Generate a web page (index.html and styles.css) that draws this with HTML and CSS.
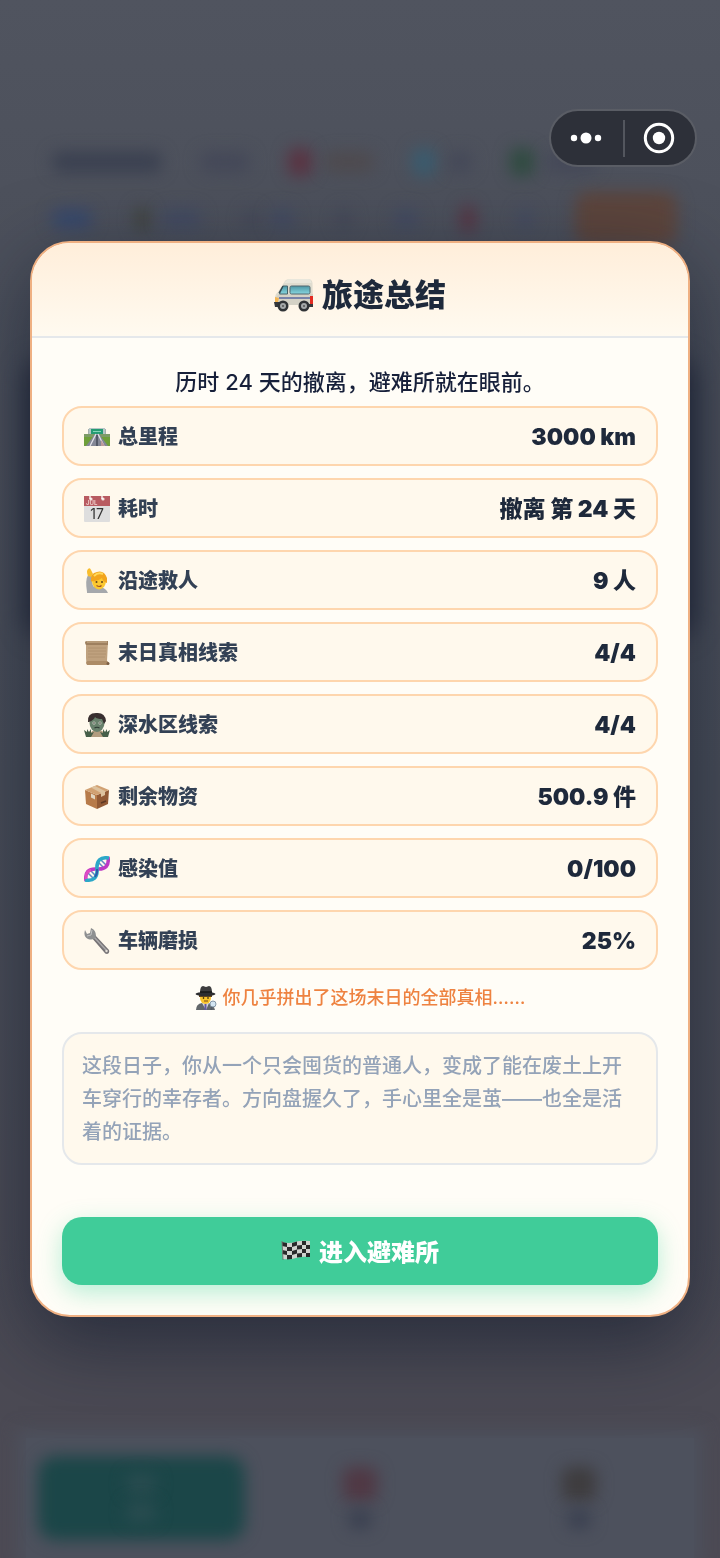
FILE: index.html
```html
<!DOCTYPE html>
<html lang="zh-CN">
<head>
<meta charset="utf-8">
<meta name="viewport" content="width=device-width, initial-scale=1">
<title>旅途总结</title>
<link rel="stylesheet" href="styles.css">
</head>
<body>
<div class="scene" aria-hidden="true">
  <div class="scene-status">
    <div class="status-row">
      <i class="blob ink wide"></i><i class="blob slate mid"></i>
      <span class="pair"><i class="blob red"></i><i class="blob brown mid"></i></span>
      <span class="pair"><i class="blob cyan"></i><i class="blob slate"></i></span>
      <span class="pair"><i class="blob green"></i><i class="blob slate mid"></i></span>
    </div>
    <div class="status-row lower">
      <i class="blob blue long"></i>
      <span class="pair"><i class="blob olive thin"></i><i class="blob navy long"></i></span>
      <span class="pair"><i class="blob slate thin"></i><i class="blob navy"></i></span>
      <i class="blob slate thin"></i><i class="blob navy"></i><i class="blob red thin"></i><i class="blob navy thin"></i>
      <i class="blob orange"></i>
    </div>
  </div>
  <div class="scene-card"></div>
  <div class="scene-nav">
    <div class="nav-cell active"><i class="blob pale"></i><i class="blob pale"></i></div>
    <div class="nav-cell"><i class="blob berry tall"></i><i class="blob ink"></i></div>
    <div class="nav-cell"><i class="blob bark tall"></i><i class="blob ink"></i></div>
  </div>
</div>

<div class="capsule">
  <button class="capsule-btn" type="button" aria-label="更多">
    <svg width="32" height="12" viewBox="0 0 32 12" fill="#fff"><circle cx="4" cy="6" r="3.2"/><circle cx="16" cy="6" r="5.5"/><circle cx="28" cy="6" r="3.2"/></svg>
  </button>
  <button class="capsule-btn" type="button" aria-label="关闭">
    <svg width="32" height="32" viewBox="0 0 32 32"><circle cx="16" cy="16" r="13.7" fill="none" stroke="#fff" stroke-width="3"/><circle cx="16" cy="16" r="6.2" fill="#fff"/></svg>
  </button>
</div>

<div class="overlay">
  <main class="modal" role="dialog" aria-labelledby="title">
    <header class="modal-head">
      <svg class="icon-title" viewBox="0 0 40 34">
        <defs><linearGradient id="glass" x1="0" y1="0" x2="0" y2="1"><stop offset="0" stop-color="#4b96a5"/><stop offset="1" stop-color="#88d6df"/></linearGradient></defs>
        <path d="M11 3Q12 1 17 1h17q4 0 4.500 4L39 27H5L1 24v-5q0-3 3-5z" fill="#dfdccf"/>
        <path d="M12 3Q13 1 17 1h17q3 0 3.500 4H10z" fill="#e9e7dc"/>
        <path d="M1 20l4-4h34v11H3z" fill="#d5d2c6"/>
        <path d="M9 8h4.500v8H5.500z" fill="url(#glass)" stroke="#446269" stroke-width="1"/>
        <path d="M5 15l4-7" stroke="#344850" stroke-width="1.300"/>
        <rect x="16" y="8" width="20" height="8" rx="1.500" fill="url(#glass)" stroke="#51676e"/>
        <path d="M5 20h33" stroke="#5968a0" stroke-width="1.600"/>
        <path d="M36 18h3v8h-3z" fill="#e32c22"/><path d="M1 19l4 1-1 4H1z" fill="#f4b654"/>
        <path d="M0 24h5v5H1zM34 26h5v3h-5z" fill="#34373b"/>
        <circle cx="9" cy="28" r="5.500" fill="#303336"/><circle cx="9" cy="28" r="3" fill="#a4a8a9"/><circle cx="9" cy="28" r="1" fill="#555"/>
        <circle cx="30" cy="28" r="5.500" fill="#303336"/><circle cx="30" cy="28" r="3" fill="#a4a8a9"/><circle cx="30" cy="28" r="1" fill="#555"/>
      </svg>
      <h1 id="title">旅途总结</h1>
    </header>

    <div class="modal-body">
      <p class="intro">历时 24 天的撤离，避难所就在眼前。</p>
      <dl class="stats">
        <div class="stat">
          <dt><svg class="icon" viewBox="0 0 26 26">
            <path d="M5 5v7M21 5v7" stroke="#87969a" stroke-width="1.500"/><rect x="5" y="4" width="16" height="7" fill="#b7c6c6"/><rect x="7" y="5" width="12" height="5" fill="#259b73"/><path d="M9 7.500h8" stroke="#83d5b8"/>
            <path d="M0 10h26v12H0z" fill="#6f9f3a"/><path d="M0 10h26v3H0z" fill="#7d9b67"/>
            <path d="M11 10h4l9 12H2z" fill="#838796"/><path d="M12 10L6 22M14 10l6 12" stroke="#e1e1e8" stroke-width="1.300"/><path d="M13 11v11" stroke="#545968" stroke-width="2"/><path d="M17 16l4 6h-4z" fill="#bc9b9b"/>
          </svg>总里程</dt><dd>3000 km</dd>
        </div>
        <div class="stat">
          <dt><svg class="icon" viewBox="0 0 26 26">
            <rect x="0" y="0" width="26" height="26" rx="1" fill="#dedede"/><path d="M0 0h26v10H0z" fill="#b85b61"/>
            <circle cx="7" cy="3" r="1.600" fill="#f3e7e4"/><circle cx="19" cy="3" r="1.600" fill="#f3e7e4"/><path d="M6 0v3M18 0v3" stroke="#fff" stroke-width="1.300"/>
            <text x="2" y="9" class="cal-month">JUL</text><text x="13" y="23" class="cal-day">17</text>
          </svg>耗时</dt><dd>撤离 第 24 天</dd>
        </div>
        <div class="stat">
          <dt><svg class="icon" viewBox="0 0 26 26">
            <path d="M3 24Q1 12 4 7l4 1q-1 7 2 11h6q6 1 8 6H3z" fill="#a5a8ac"/><path d="M4 8Q2 3 4 1q2-2 3 1l2 4-2 3z" fill="#f8bd2d"/>
            <ellipse cx="15" cy="13" rx="7" ry="8.500" fill="#fbc82f"/><path d="M7 14Q6 5 13 4q7-2 10 6v5q-4-1-5-5-5 4-10 3z" fill="#f2a51d"/><path d="M10 8q4-4 9-2" stroke="#ffd95a" stroke-width="2" fill="none"/>
            <circle cx="12.500" cy="14" r="1" fill="#61441c"/><circle cx="18" cy="14" r="1" fill="#61441c"/><path d="M12.500 17.500q3 2 5 0" fill="none" stroke="#a45322" stroke-width="1.200"/>
          </svg>沿途救人</dt><dd>9 人</dd>
        </div>
        <div class="stat">
          <dt><svg class="icon" viewBox="0 0 26 26">
            <path d="M2 2h22l-1 19 2 3H3q-1-3-1-6z" fill="#bfa17e"/><path d="M1 2q0-1 3-1h20v4H2Q1 4 1 2z" fill="#9e805f"/><path d="M3 2h20" stroke="#d0b694"/><path d="M2 23q0-2 2-2h19q2 1 2 3l-2 1H3z" fill="#ad8c67"/><path d="M4 8h18M4 11h18M4 14h18M4 17h17" stroke="#ad8f6d" stroke-width=".8"/><circle cx="24" cy="23.500" r="1.500" fill="#7b5e44"/>
          </svg>末日真相线索</dt><dd>4/4</dd>
        </div>
        <div class="stat">
          <dt><svg class="icon" viewBox="0 0 26 26">
            <path d="M5 25q1-6 6-7h4q6 1 7 7z" fill="#b29c7f"/><ellipse cx="13" cy="11" rx="7.500" ry="9" fill="#68806b"/><path d="M4 10Q3 1 12 1q9-1 10 8l-2 3-2-5q-5 0-7-2-1 3-6 5z" fill="#392f2f"/>
            <circle cx="10" cy="11" r="1.500" fill="#dde1d3"/><circle cx="16" cy="11" r="1.500" fill="#dde1d3"/><circle cx="10" cy="11" r=".7"/><circle cx="16" cy="11" r=".7"/><path d="M10.500 16q2.500-1.500 5 0" stroke="#2d3932" stroke-width="1.200" fill="none"/>
            <path d="M0 18l3 2v-3l2 3 2-3v4l3-1-3 5H2z M26 18l-3 2v-3l-2 3-2-3v4l-3-1 3 5h5z" fill="#465f49"/>
          </svg>深水区线索</dt><dd>4/4</dd>
        </div>
        <div class="stat">
          <dt><svg class="icon" viewBox="0 0 26 26">
            <path d="M1 6l12 5v14L2 20z" fill="#b77b4a"/><path d="M25 6l-12 5v14l11-5z" fill="#925a35"/><path d="M1 6l12-5 12 5-12 5z" fill="#d1a172"/><path d="M7 3.500l10 5.500v4l4-2V7L11 2z" fill="#ddc29e"/><path d="M7 9.500l4 2v4l-4-2z" fill="#e2d7c2"/><path d="M17 19l5-2" stroke="#5e3823" stroke-width="1.500"/>
          </svg>剩余物资</dt><dd>500.9 件</dd>
        </div>
        <div class="stat">
          <dt><svg class="icon" viewBox="0 0 26 26" fill="none">
            <path d="M4 17l5 5M7 15l5 5M14 6l5 5M17 4l5 5" stroke="#6386c3" stroke-width="1.500"/>
            <path d="M2 25Q0 12 13 13T24 1" stroke="#bd39c5" stroke-width="3.500"/><path d="M1 24Q14 26 13 13T25 2" stroke="#2ca8c8" stroke-width="3.500"/><path d="M2 23Q1 16 7 14" stroke="#e04bc2" stroke-width="2.500"/><path d="M13 13q1 4-2 8" stroke="#3259aa" stroke-width="2"/>
          </svg>感染值</dt><dd>0/100</dd>
        </div>
        <div class="stat">
          <dt><svg class="icon" viewBox="0 0 26 26">
            <path d="M7 9l4-2 14 15q1 3-2 4-2 0-3-2z" fill="#777477"/><path d="M10 9l13 14" stroke="#aaa9aa" stroke-width="1.500"/><path d="M7 0l-1 5-3 1-2-4Q-1 9 4 11q6 2 8-3 0-6-5-8z" fill="#8e9091"/><path d="M8 2l-1 5-4 1" fill="none" stroke="#c1c2c2"/><circle cx="22.500" cy="23" r="1.200" fill="#e6e1d9"/>
          </svg>车辆磨损</dt><dd>25%</dd>
        </div>
      </dl>
      <p class="hint">
        <svg class="icon-hint" viewBox="0 0 22 24">
          <path d="M1 24q0-6 6-7h6q6 1 7 7z" fill="#62676b"/><path d="M7 17h7l-3 7z" fill="#d7d9de"/><path d="M10.500 18v6" stroke="#6558a0" stroke-width="2"/>
          <ellipse cx="10.500" cy="12" rx="5.500" ry="6" fill="#fac42c"/><path d="M4 9h13v2H4z" fill="#60441e"/><path d="M5 7q0-7 3-7l3 1 3-1q3 0 3 7z" fill="#3d3d3e"/><ellipse cx="10.500" cy="8" rx="10" ry="2" fill="#2c2d30"/><path d="M5 6h12" stroke="#171819" stroke-width="1.500"/>
          <circle cx="8.500" cy="12" r=".8"/><circle cx="13" cy="12" r=".8"/><path d="M9 15h4" stroke="#7b4c1b"/>
          <circle cx="18" cy="18" r="3" fill="#d3e5f1" stroke="#8497a6"/><path d="M17 21l-1 3" stroke="#525b64" stroke-width="1.500"/>
        </svg>
        <span>你几乎拼出了这场末日的全部真相……</span>
      </p>
      <p class="note">这段日子，你从一个只会囤货的普通人，变成了能在废土上开车穿行的幸存者。方向盘握久了，手心里全是茧——也全是活着的证据。</p>
    </div>

    <footer class="modal-foot">
      <button class="enter" type="button">
        <svg class="icon-flag" viewBox="0 0 30 24">
          <path d="M1 4q7 2 13 0t15-1v16q-8-1-14 1T2 21z" fill="#cfd2ce"/>
          <g fill="#28292a"><path d="M1 4l5 1v4l-5-1zM11 5l5-1.500v4L11 9zM21 3h4v4h-4zM6 9l5 0v4H6zM16 7.500l5-.5v4l-5 .5zM25 7h4v4h-4zM1 12l5 1v4l-5-1zM11 13l5-1.500v4L11 17zM21 11h4v4h-4zM6 17l5 0v4l-5 .500zM16 15.500l5-.5v4l-5 .500zM25 15h4v4h-4z"/></g>
          <path d="M1 3l1 19" stroke="#6e7770" stroke-width="1"/>
        </svg>
        <span>进入避难所</span>
      </button>
    </footer>
  </main>
</div>
</body>
</html>
```
FILE: styles.css
```css
* { box-sizing: border-box; }
body {
  margin: 0;
  min-height: 100vh;
  background: #4b4b55;
  color: #1e293b;
  font-family: Inter, "Noto Sans CJK SC", sans-serif;
}
h1, p, dl, dd { margin: 0; }
button { border: 0; font: inherit; cursor: pointer; }
svg { display: block; flex: none; }

/* Blurred game screen behind the dialog */
.scene {
  position: fixed;
  inset: 0;
  display: flex;
  flex-direction: column;
  overflow: hidden;
  background: linear-gradient(#50545f 0, #4c505b 16%, #484d58 50%, #4b4a54 88%, #4c4a54 100%);
}
.scene-status {
  display: flex;
  flex-direction: column;
  gap: 18px;
  padding: 146px 38px 0 52px;
}
.status-row { display: flex; align-items: center; gap: 38px; height: 32px; }
.status-row.lower { gap: 43px; height: 46px; }
.pair { display: flex; align-items: center; gap: 12px; }
.blob { flex: none; width: 24px; height: 20px; border-radius: 8px; filter: blur(8px); }
.blob.wide { width: 110px; }
.blob.mid { width: 50px; }
.blob.long { width: 40px; }
.blob.thin { width: 14px; }
.blob.ink { background: #3a4050; }
.blob.slate { background: #444858; }
.blob.red { background: #5a3342; height: 28px; }
.blob.brown { background: #4e4a4e; }
.blob.cyan { background: #3a5b6e; height: 28px; }
.blob.green { background: #2f4b40; height: 28px; }
.blob.blue { background: #38496c; }
.blob.navy { background: #434b62; }
.blob.olive { background: #41443f; height: 26px; }
.blob.orange { width: 102px; height: 54px; background: #5d453c; border-radius: 14px; }
.blob.pale { width: 30px; background: #2a4c50; }
.blob.berry { background: #503844; }
.blob.bark { background: #3e3c3e; }
.blob.tall { width: 34px; height: 34px; }
.scene-card {
  height: 280px;
  margin: 116px 24px 0;
  border-radius: 24px;
  background: #292f40;
  filter: blur(12px);
}
.scene-nav {
  display: grid;
  grid-template-columns: repeat(3, 1fr);
  gap: 12px;
  margin: auto 26px 0;
  padding: 18px 12px;
  background: #4d515d;
  box-shadow: 0 0 16px 8px #4d515d;
}
.nav-cell {
  position: relative;
  display: flex;
  flex-direction: column;
  align-items: center;
  justify-content: center;
  gap: 8px;
  height: 84px;
}
.nav-cell.active::before {
  content: "";
  position: absolute;
  inset: 0;
  border-radius: 18px;
  background: #1b4648;
  filter: blur(8px);
}

/* Mini-program capsule */
.capsule {
  position: fixed;
  z-index: 3;
  top: 109px;
  right: 23px;
  display: flex;
  width: 148px;
  height: 58px;
  padding: 0 2px 0 1px;
  border: 2px solid #5a5d65;
  border-radius: 29px;
  background: #2d3039;
}
.capsule-btn {
  display: flex;
  flex: 1;
  align-items: center;
  justify-content: center;
  padding: 0;
  background: none;
}
.capsule-btn:last-child { padding-left: 6px; }
.capsule-btn + .capsule-btn::before {
  content: "";
  position: absolute;
  left: 50%;
  width: 2px;
  height: 37px;
  background: #53565e;
}

/* Dialog */
.overlay {
  position: relative;
  z-index: 2;
  display: flex;
  align-items: center;
  justify-content: center;
  min-height: 100vh;
  padding: 0 30px;
}
.modal {
  width: 100%;
  overflow: hidden;
  border: 2px solid #efb082;
  border-radius: 40px;
  background: #fffdf7;
  box-shadow: 0 24px 80px rgba(15, 23, 42, .6);
}
.modal-head {
  display: flex;
  align-items: center;
  justify-content: center;
  gap: 8px;
  height: 95px;
  padding-top: 10px;
  border-bottom: 2px solid #e5e8eb;
  background: linear-gradient(#ffeeda, #fffaf0);
}
.icon-title { width: 40px; height: 34px; }
h1 { font-size: 31px; line-height: 40px; font-weight: 900; }
.modal-body { padding: 29px 30px 22px; }
.intro {
  margin-bottom: 9px;
  color: #17203a;
  font-size: 22px;
  line-height: 30px;
  font-weight: 500;
  text-align: center;
}
.stats { display: flex; flex-direction: column; gap: 12px; }
.stat {
  display: flex;
  align-items: center;
  justify-content: space-between;
  height: 60px;
  padding: 2px 20px 0;
  border: 2px solid #fed6ae;
  border-radius: 20px;
  background: #fff9ed;
}
.stat dt {
  display: flex;
  align-items: center;
  gap: 8px;
  color: #334155;
  font-size: 20px;
  line-height: 28px;
  font-weight: 900;
}
.stat dd { font-size: 23px; line-height: 28px; font-weight: 900; }
.icon { width: 26px; height: 26px; }
.cal-month { font-size: 6px; font-weight: 600; fill: #f1d2ce; }
.cal-day { font-size: 14px; font-weight: 400; fill: #333; text-anchor: middle; }
.hint {
  display: flex;
  align-items: center;
  justify-content: center;
  gap: 6px;
  margin: 14px 0 20px;
  color: #ee8240;
  font-size: 18px;
  line-height: 28px;
  font-weight: 500;
}
.icon-hint { width: 22px; height: 24px; }
.note {
  padding: 16px 18px 14px;
  border: 2px solid #e5e8eb;
  border-radius: 20px;
  background: #fff9ed;
  color: #94a3b8;
  font-size: 20px;
  line-height: 33px;
  font-weight: 500;
}
.modal-foot { padding: 30px; }
.enter {
  display: flex;
  align-items: center;
  justify-content: center;
  gap: 8px;
  width: 100%;
  height: 68px;
  padding: 0 0 2px;
  border-radius: 20px;
  background: #40cc99;
  box-shadow: 0 8px 24px rgba(52, 211, 153, .35);
  color: #fff;
  font-size: 24px;
  font-weight: 900;
}
.icon-flag { width: 30px; height: 24px; }
```
